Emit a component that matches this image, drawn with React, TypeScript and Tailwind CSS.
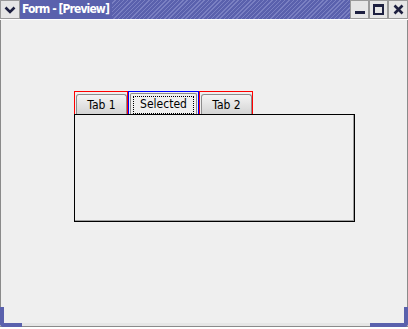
import React from "react";

const tabFont = "font-['DejaVu_Sans_Condensed','DejaVu_Sans',sans-serif]";

export default function App() {
  return (
    <div className="w-[408px] h-[329px] bg-white font-['DejaVu_Sans',sans-serif] overflow-hidden">
      <div className="relative w-[408px] h-[327px] flex flex-col bg-[#efefef]">
        {/* Title bar */}
        <div className="h-[19px] flex bg-[#5a61ad]">
          <div className="w-[20px] h-[19px] bg-[#e6e6e6] border border-[#9a9a9a] flex items-center justify-center">
            <svg width="12" height="8" viewBox="0 0 12 8">
              <path d="M1.5 1.5 L6 6 L10.5 1.5" stroke="#1d2040" strokeWidth="2.6" fill="none" />
            </svg>
          </div>
          <div className={`pl-[2px] pr-[3px] text-white font-bold text-[12px] leading-[19px] tracking-[-0.9px] ${tabFont}`}>Form - [Preview]</div>
          <div className="flex-1 bg-[repeating-linear-gradient(135deg,#5a61ad_0px,#5a61ad_2px,#7a80c2_2px,#7a80c2_3px)]" />
          <div className="flex h-[19px]">
            <div className="w-[19px] h-[19px] bg-[#e6e6e6] border border-[#9a9a9a] flex items-center justify-center">
              <div className="w-[10px] h-[3px] bg-[#1d2040] mt-[5px]" />
            </div>
            <div className="w-[19px] h-[19px] bg-[#e6e6e6] border border-[#9a9a9a] flex items-center justify-center">
              <div className="w-[11px] h-[11px] border-2 border-t-[3px] border-[#1d2040]" />
            </div>
            <div className="w-[20px] h-[19px] bg-[#e6e6e6] border border-[#9a9a9a] flex items-center justify-center">
              <svg width="11" height="11" viewBox="0 0 11 11">
                <path d="M1.5 1.5 L9.5 9.5 M9.5 1.5 L1.5 9.5" stroke="#1d2040" strokeWidth="2.6" fill="none" />
              </svg>
            </div>
          </div>
        </div>
        <div className="h-[1px] bg-white" />
        {/* Content */}
        <div className="flex-1 flex flex-col border-l border-[#8a8a8a] border-r border-r-[#8a8a8a]">
          <div className="ml-[73px] mt-[71px] flex flex-col items-start">
            <div className={`flex h-[24px] ${tabFont}`}>
              <div className="w-[54px] h-[24px] border border-[#ff0000] pt-[2px] pl-[1px]">
                <div className="w-[51px] h-[21px] rounded-t-[3px] border border-[#8c8c8c] border-b-0 bg-[linear-gradient(#f4f4f4,#d2d2d2)] text-[12px] text-black leading-[20px] text-center">Tab 1</div>
              </div>
              <div className="w-[71px] h-[24px] border border-[#0000ff] pt-[1px] px-[1px]">
                <div className="w-[67px] h-[22px] rounded-t-[2px] border border-[#8c8c8c] border-b-0 bg-[#efefef] pt-[2px] px-[2px]">
                  <div className="w-full h-[18px] border border-dotted border-black text-[12px] text-black leading-[15px] text-center">Selected</div>
                </div>
              </div>
              <div className="w-[54px] h-[24px] border border-[#ff0000] pt-[2px] pl-[1px]">
                <div className="w-[51px] h-[21px] rounded-t-[3px] border border-[#8c8c8c] border-b-0 bg-[linear-gradient(#f4f4f4,#d2d2d2)] text-[12px] text-black leading-[20px] text-center">Tab 2</div>
              </div>
            </div>
            <div className="-mt-[1px] w-[281px] h-[108px] border border-black shadow-[inset_-1px_-1px_0_#a0a0a0]" />
          </div>
        </div>
        {/* Bottom frame */}
        <div className="h-[4px] bg-[#e6e6e6] border-b border-[#8a8a8a]" />
        <div className="absolute left-0 bottom-0 w-[22px] h-[20px] border-l-[4px] border-b-[4px] border-[#5a61ad] rounded-bl-[4px]" />
        <div className="absolute right-0 bottom-0 w-[38px] h-[20px] border-r-[4px] border-b-[4px] border-[#5a61ad] rounded-br-[4px]" />
      </div>
    </div>
  );
}
